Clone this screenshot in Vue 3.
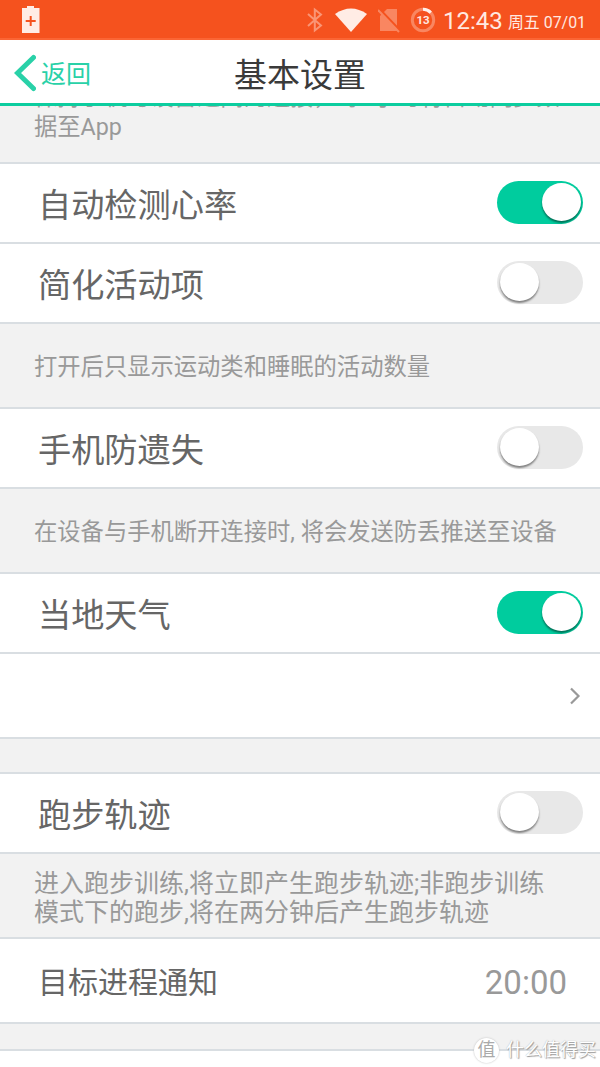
<script setup>
const rows = [
  { kind: 'note', h: 58, clipped: true, lines: ['保持手机与设备之间的连接，每1小时将自动同步数', '据至App'] },
  { kind: 'switch', h: 80, label: '自动检测心率', on: true },
  { kind: 'switch', h: 80, label: '简化活动项', on: false },
  { kind: 'note', h: 85, lines: ['打开后只显示运动类和睡眠的活动数量'] },
  { kind: 'switch', h: 80, label: '手机防遗失', on: false },
  { kind: 'note', h: 85, lines: ['在设备与手机断开连接时, 将会发送防丢推送至设备'] },
  { kind: 'switch', h: 80, label: '当地天气', on: true },
  { kind: 'link', h: 85 },
  { kind: 'gap', h: 35 },
  { kind: 'switch', h: 80, label: '跑步轨迹', on: false },
  { kind: 'note', h: 85, wide: true, lines: ['进入跑步训练,将立即产生跑步轨迹;非跑步训练', '模式下的跑步,将在两分钟后产生跑步轨迹'] },
  { kind: 'setting', h: 85, label: '目标进程通知', value: '20:00' },
  { kind: 'gap', h: 27 },
  { kind: 'blank', h: 16 },
]
</script>

<template>
  <div class="screen">
    <header class="status">
      <svg class="battery" width="18" height="27" viewBox="0 0 18 27">
        <path d="M0 2h5V0h7v2h5.500v25H0z" fill="#ffece5" />
        <path d="M7.700 10h2v4h4v2h-4v4h-2v-4h-4v-2h4z" fill="#f5521e" />
      </svg>
      <div class="tray">
        <svg class="bt" width="16" height="26" viewBox="0 0 16 26" fill="none" stroke="#fa9575" stroke-width="2">
          <path d="M1 7l13 11.500-6.200 5V2.500l6.200 5L1 19" />
        </svg>
        <svg class="wifi" width="32" height="25" viewBox="0 0 32 25">
          <path d="M0 6Q16-5 32 6L16 24z" fill="#ffece5" />
        </svg>
        <svg class="sim" width="22" height="25" viewBox="0 0 22 25">
          <path d="M9 1h10v22H2V8z" fill="#f98661" />
          <path d="M1 1l21 22" stroke="#f5521e" stroke-width="3" />
          <path d="M0 2l21 22" stroke="#f98661" stroke-width="2" />
        </svg>
        <span class="ring">
          <svg width="26" height="26" viewBox="0 0 26 26" fill="none" stroke-width="3">
            <circle cx="13" cy="13" r="10.700" stroke="#f98661" />
            <path d="M13 2.300A10.700 10.700 0 0 1 20.800 5.600" stroke="#fff0ea" />
          </svg>
          <b>13</b>
        </span>
        <span class="clock">12:43</span>
        <span class="date">周五 07/01</span>
      </div>
    </header>

    <nav class="bar">
      <div class="back">
        <svg width="22" height="38" viewBox="0 0 22 38" fill="none" stroke="#29d1a8" stroke-width="5" stroke-linecap="round">
          <path d="M19.500 3.500L3.500 19l16 15.500" />
        </svg>
        <span>返回</span>
      </div>
      <h1>基本设置</h1>
    </nav>

    <main>
      <section v-for="(r, i) in rows" :key="i" class="row" :class="[r.kind, { clipped: r.clipped, wide: r.wide }]" :style="{ height: r.h + 'px' }">
        <div v-if="r.kind === 'note'" class="lines">
          <p v-for="l in r.lines" :key="l">{{ l }}</p>
        </div>
        <span v-if="r.label" class="label">{{ r.label }}</span>
        <span v-if="r.kind === 'switch'" class="toggle" :class="{ on: r.on }"><i></i></span>
        <svg v-if="r.kind === 'link'" class="chevron" width="12" height="18" viewBox="0 0 12 18" fill="none" stroke="#999" stroke-width="2.200">
          <path d="M2 1.500L9.500 9 2 16.500" />
        </svg>
        <span v-if="r.value" class="value">{{ r.value }}</span>
      </section>
    </main>

    <div class="mark"><span class="seal">值</span><span>什么值得买</span></div>
  </div>
</template>

<style>
body { margin: 0; }
</style>

<style scoped>
.screen {
  position: relative;
  width: 600px;
  height: 1067px;
  overflow: hidden;
  background: #fff;
  font-family: Roboto, "Noto Sans CJK SC", sans-serif;
  color: #666;
}
.status {
  box-sizing: border-box;
  height: 40px;
  padding: 0 14px 0 22px;
  display: flex;
  justify-content: space-between;
  align-items: center;
  background: #f5521e;
  border-bottom: 2px solid #fb6534;
}
.battery { margin-top: 1px; }
.tray { display: flex; align-items: center; color: #ffe9e1; white-space: nowrap; }
.bt, .wifi, .sim { margin-top: 2px; }
.wifi { margin-left: 12px; }
.sim { margin-left: 11px; }
.ring { position: relative; width: 26px; height: 26px; margin-left: 10px; margin-top: 1px; }
.ring svg { display: block; }
.ring b { position: absolute; inset: 0; text-align: center; font-size: 11.500px; line-height: 27px; }
.clock { margin-left: 7px; font-size: 24px; line-height: 38px; width: 57px; margin-top: 3px; }
.date { margin-left: 8px; font-size: 15.900px; line-height: 30px; margin-top: 8px; }
.bar {
  position: relative;
  z-index: 1;
  box-sizing: border-box;
  height: 66px;
  display: flex;
  align-items: center;
  justify-content: center;
  border-bottom: 3px solid #0ccd9f;
  background: #fff;
}
.back { position: absolute; left: 14px; top: 13px; display: flex; align-items: center; gap: 5px; color: #29d1a8; font-size: 25px; line-height: 38px; }
.back svg { margin-top: -2px; }
.back span { padding-top: 3px; }
h1 { margin: 8px 0 0; font-size: 33px; line-height: 40px; font-weight: 400; color: #3a3a3a; }
main { overflow: hidden; }
.row {
  box-sizing: border-box;
  display: flex;
  align-items: center;
  justify-content: space-between;
  padding: 0 17px 0 38px;
  border-bottom: 2px solid #d9dee2;
  background: #fff;
}
.row.blank { border: 0; }
.row.link { justify-content: flex-end; }
.row.note, .row.gap { background: #f2f2f2; }
.row.note { padding-left: 34px; color: #999; font-size: 23.300px; }
.lines { padding-top: 4px; }
.lines p { margin: 0; line-height: 29px; white-space: nowrap; }
.row.clipped { align-items: flex-end; }
.clipped .lines { padding: 0 0 20px; }
.clipped .lines p { line-height: 30px; }
.row.wide { font-size: 25px; }
.label { padding-top: 5px; font-size: 33.200px; line-height: 40px; }
.setting .label { font-size: 30px; padding-top: 4px; }
.value { margin-right: 16px; padding-top: 3px; font-size: 33px; color: #999; }
.toggle { display: block; box-sizing: border-box; width: 86px; height: 43px; margin-top: -2px; padding: 2.500px; border-radius: 22px; background: #e8e8e8; }
.toggle i { display: block; width: 39px; height: 38px; border-radius: 50%; background: #fff; box-shadow: 0 2px 2px rgba(0, 0, 0, 0.45); }
.toggle.on { background: #00cc9e; }
.toggle.on i { margin-left: 42.500px; }
.chevron { margin-right: 2px; }
.mark { position: absolute; right: 4px; bottom: 2px; display: flex; align-items: center; gap: 7px; font-size: 18px; line-height: 30px; color: #fff; text-shadow: 1px 1px 1px #999, 0 0 1px #aaa; }
.seal { width: 25px; height: 25px; border-radius: 50%; background: #fff; color: #aaa; line-height: 24px; text-align: center; text-shadow: none; box-shadow: 0 0 2px #bbb; }
</style>
